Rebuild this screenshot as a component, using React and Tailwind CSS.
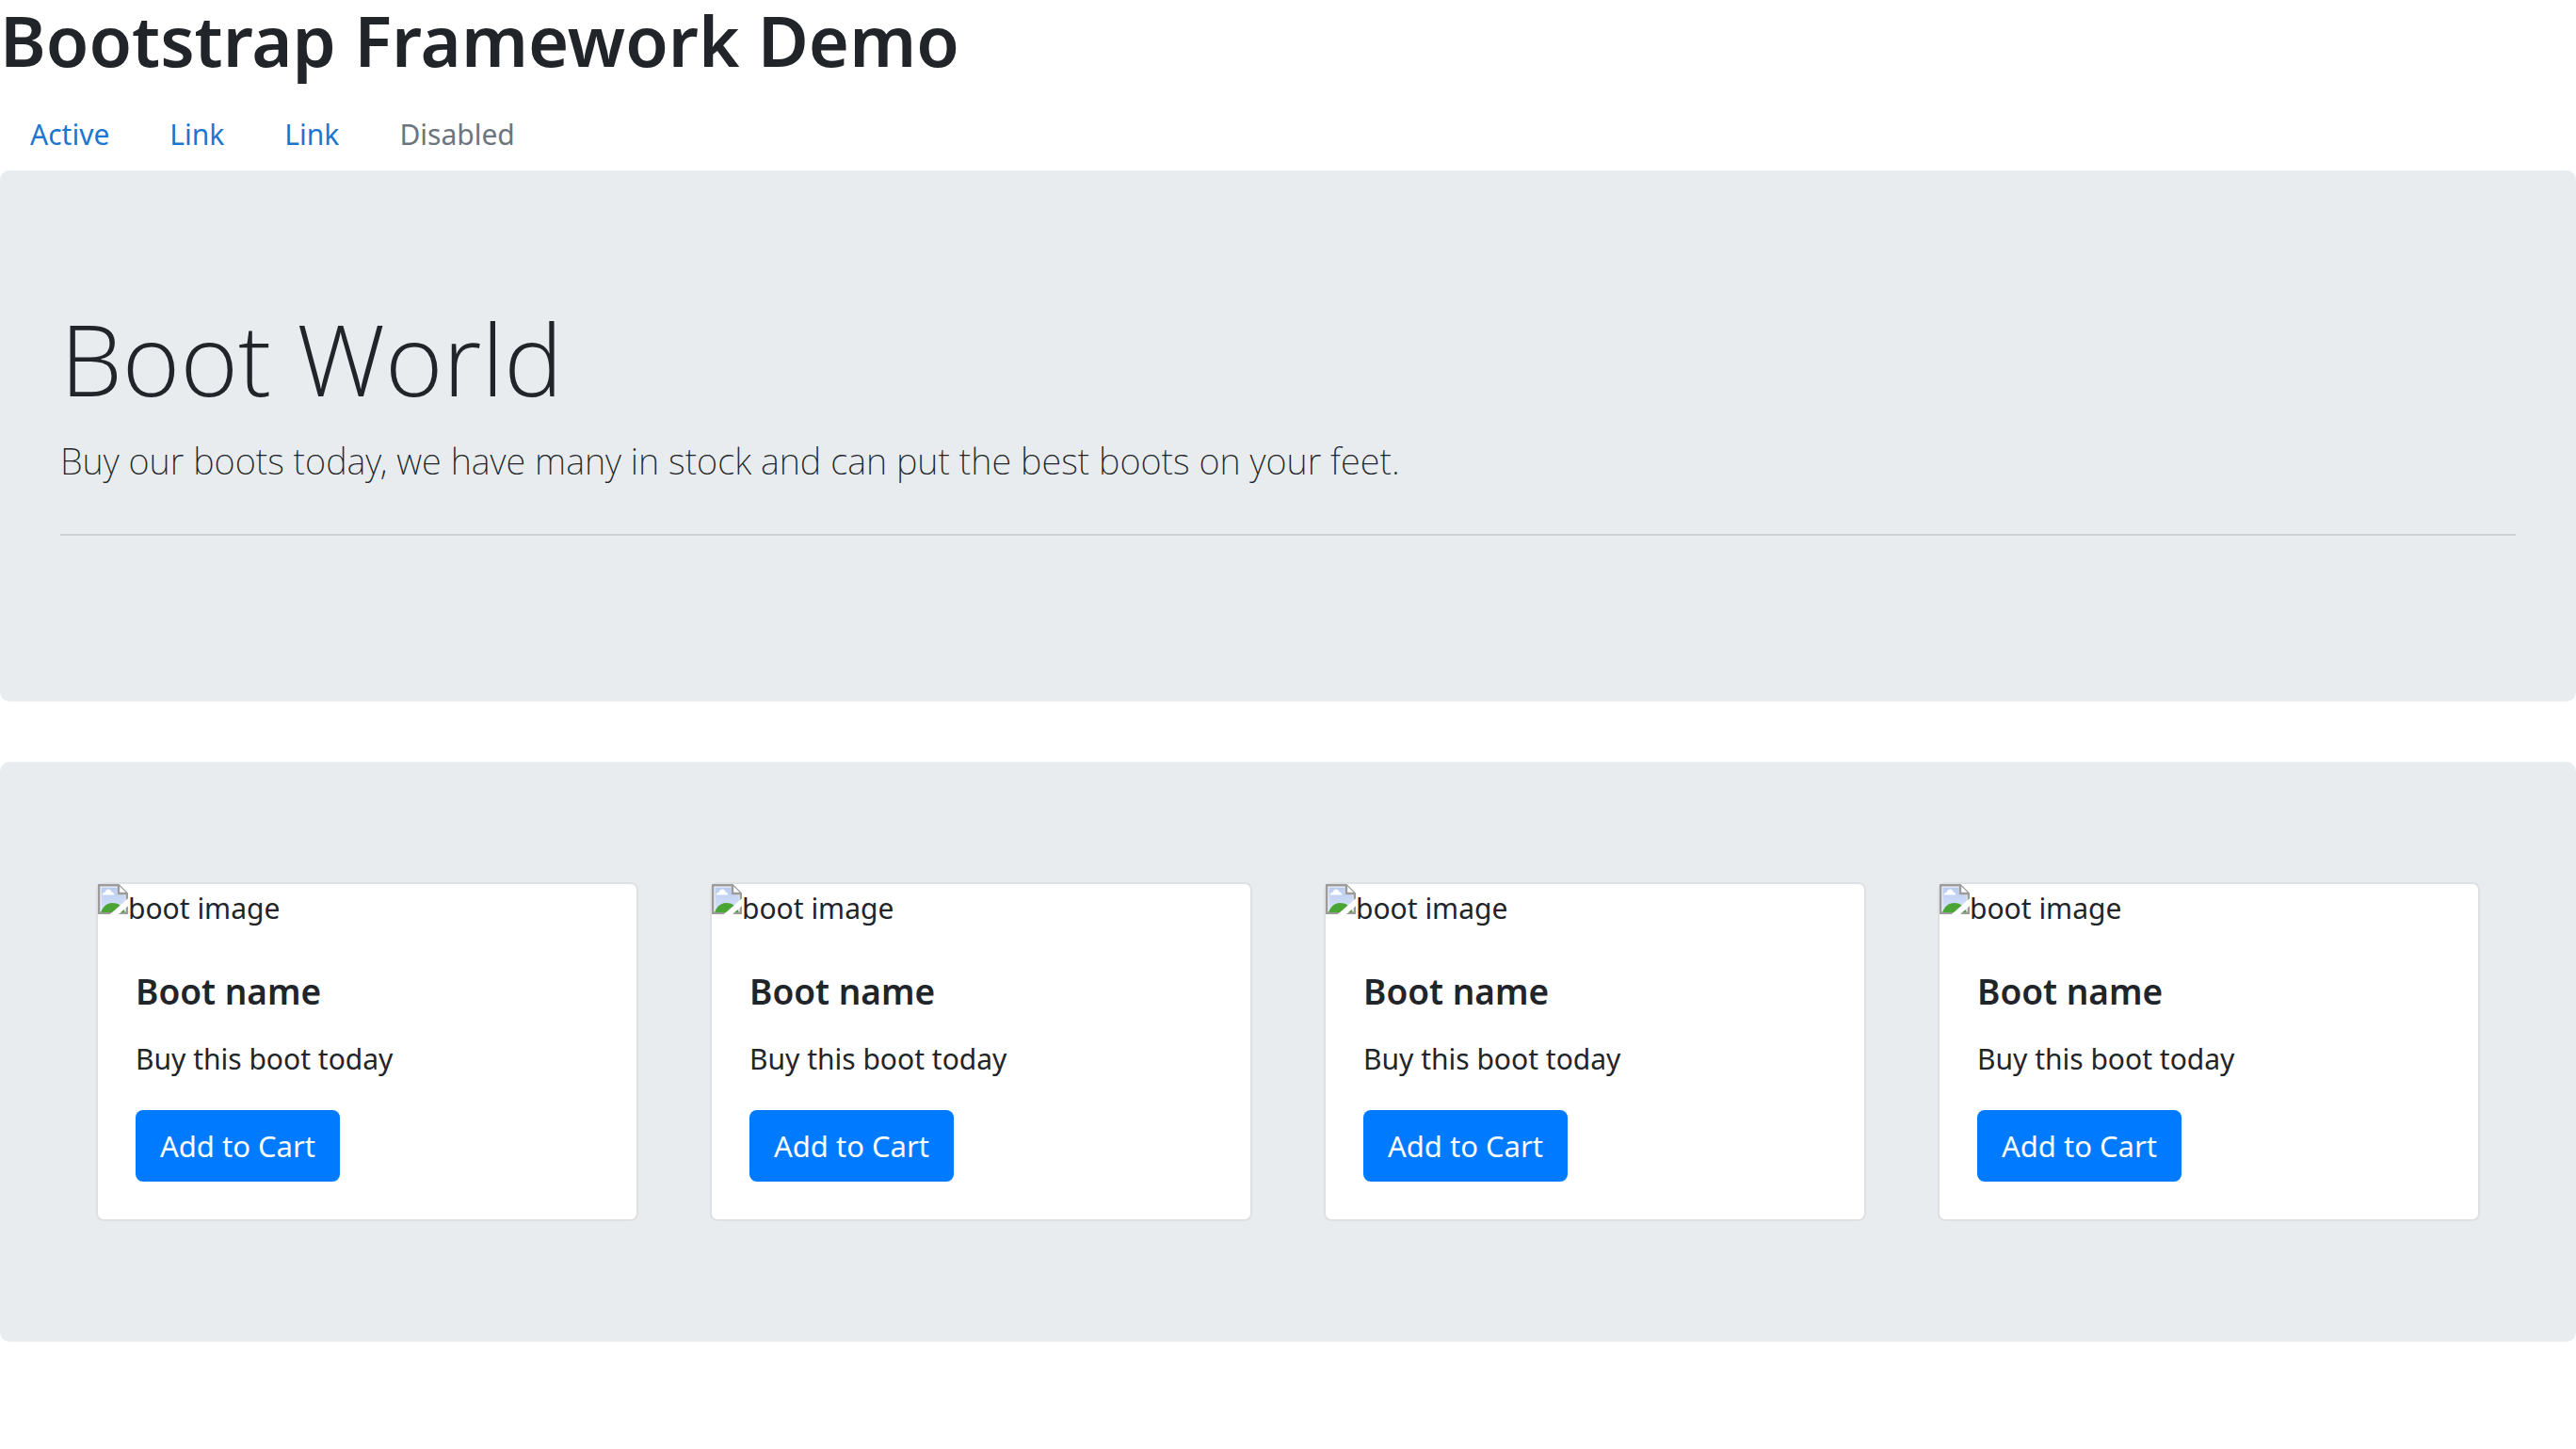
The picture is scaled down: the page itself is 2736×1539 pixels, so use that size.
const products = [
  { id: 1, name: "Boot name", text: "Buy this boot today" },
  { id: 2, name: "Boot name", text: "Buy this boot today" },
  { id: 3, name: "Boot name", text: "Buy this boot today" },
  { id: 4, name: "Boot name", text: "Buy this boot today" },
];

const links = ["Active", "Link", "Link"];

function BrokenImage() {
  return (
    <svg className="size-8 shrink-0" viewBox="0 0 16 16" aria-hidden="true">
      <defs>
        <linearGradient id="sky" x1="0" y1="0" x2="0" y2="1">
          <stop offset="0" stopColor="#b9cbf0" />
          <stop offset="1" stopColor="#dbe5fb" />
        </linearGradient>
        <clipPath id="sheet">
          <path d="M0 0H16V7.6L6.4 16H0ZM16 11.6V16H11Z" />
        </clipPath>
      </defs>
      <g clipPath="url(#sheet)">
        <path d="M.6 .6H11L15.4 5V15.4H.6Z" fill="#fff" stroke="#9b9b9b" strokeWidth="1.2" />
        <path d="M1.7 1.7H10.4V5.6H14.4V14.8H1.7Z" fill="url(#sky)" />
        <path d="M2.4 5.8C2.4 4.8 3.2 4.4 3.8 4.4C4 3.3 4.8 2.7 5.6 2.7C6.6 2.7 7.2 3.4 7.3 4.2C8.1 4.3 8.6 5 8.6 5.8Z" fill="#fff" />
        <path d="M1.6 15C2.4 12 4.9 10 7.6 10C10.8 10 13 11.6 14.4 15Z" fill="#4ba534" />
        <path d="M11 .6V5H15.4" fill="#fff" stroke="#9b9b9b" strokeWidth="1.2" />
      </g>
    </svg>
  );
}

function ProductCard({ name, text }) {
  return (
    <article className="w-full max-w-144 rounded-lg border-2 border-[#dfe0e1] bg-white">
      <div className="flex h-12 text-[30px] leading-[52px]">
        <BrokenImage />
        <span>boot image</span>
      </div>
      <div className="px-10 pt-[42px] pb-10">
        <h5 className="mb-6 text-[37px] leading-12 font-semibold">{name}</h5>
        <p className="mb-[30px] text-[30px] leading-12">{text}</p>
        <button type="button" className="rounded-lg bg-[#007bff] px-[26px] py-[14px] text-[31px] leading-12 text-white">
          Add to Cart
        </button>
      </div>
    </article>
  );
}

export default function App() {
  return (
    <div className="min-h-screen bg-white font-['Noto_Sans','Open_Sans',sans-serif] text-[#212529]">
      <h1 className="mb-4 text-[74px] leading-[85px] font-semibold">Bootstrap Framework Demo</h1>
      <nav className="flex text-[30px] leading-12">
        {links.map((label, i) => (
          <a key={i} href="#" className="px-8 pt-[18px] pb-[14px] text-[#1b76d1]">
            {label}
          </a>
        ))}
        <a href="#" aria-disabled="true" className="pointer-events-none px-8 pt-[18px] pb-[14px] text-[#6c757d]">
          Disabled
        </a>
      </nav>
      <section className="mb-16 rounded-[10px] bg-[#e8ecef] px-16 py-32">
        <h2 className="mb-1.5 font-['Open_Sans',sans-serif] text-[105px] leading-[144px] font-light">Boot World</h2>
        <p className="text-[38px] leading-[60px] font-extralight">
          Buy our boots today, we have many in stock and can put the best boots on your feet.
        </p>
        <hr className="my-12 border-t-2 border-[#cdd1d4]" />
      </section>
      <section className="mb-16 grid grid-cols-4 justify-items-center rounded-[10px] bg-[#e8ecef] px-16 py-32">
        {products.map((p) => (
          <ProductCard key={p.id} name={p.name} text={p.text} />
        ))}
      </section>
    </div>
  );
}
